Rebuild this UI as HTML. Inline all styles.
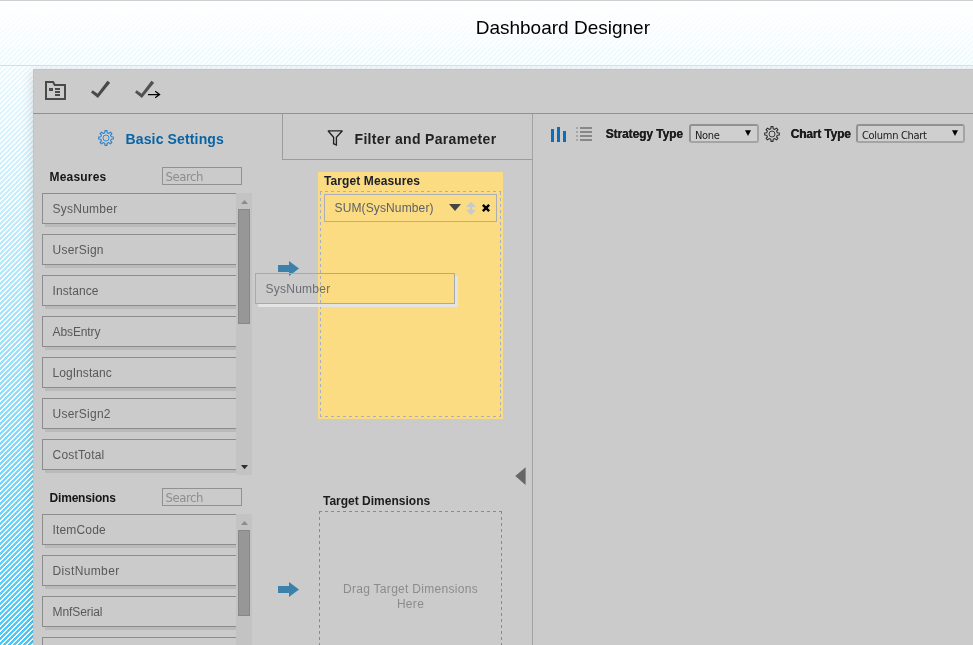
<!DOCTYPE html>
<html>
<head>
<meta charset="utf-8">
<title>Dashboard Designer</title>
<style>
html,body{margin:0;padding:0;}
body{width:973px;height:645px;overflow:hidden;position:relative;font-family:"Liberation Sans",Arial,sans-serif;font-size:12px;color:#222;
 background:linear-gradient(to bottom,rgb(255,255,255) 0px,rgb(70,201,249) 645px);}
.abs{position:absolute;}
#stripes{left:0;top:0;}
#all{left:0;top:0;width:973px;height:645px;will-change:transform;}
#topline{left:0;top:0;width:973px;height:1px;background:#cfcfcf;}
#hline{left:0;top:65px;width:973px;height:1px;background:#dcdcdc;}
#title{left:475.7px;top:17px;font-size:19px;line-height:22px;color:#000;white-space:nowrap;}
#panel{left:33px;top:3px;width:960px;height:600px;background:#cbcbcb;border-left:1px solid #c5c3c3;border-top:1px solid #c5c3c3;box-sizing:border-box;box-shadow:0 3px 11px rgba(40,20,10,0.17);}
#tbline{left:33px;top:113px;width:940px;height:1px;background:#929292;}
#vline{left:532px;top:114px;width:1px;height:531px;background:#a2a2a2;}
#tab2{left:282px;top:114px;width:250px;height:46px;border-left:1px solid #9c9c9c;border-bottom:1px solid #9c9c9c;box-sizing:border-box;}
.tabtxt{font-weight:bold;font-size:14px;line-height:16px;white-space:nowrap;}
#t1{left:125.5px;top:131px;color:#0a64a4;letter-spacing:0.14px;}
#t2{left:354.5px;top:131px;color:#222;letter-spacing:0.33px;}
.hd{font-weight:bold;font-size:12px;line-height:14px;color:#161616;white-space:nowrap;}
.search{width:80px;height:18px;box-sizing:border-box;border:1px solid #919191;background:#cbcbcb;color:#8e8e8e;font-family:"DejaVu Sans Condensed","Liberation Sans",sans-serif;font-size:13px;line-height:16px;padding:1px 0 0 2.6px;letter-spacing:-0.45px;white-space:nowrap;overflow:hidden;}
.clip{overflow:hidden;}
.item{left:6px;width:194px;height:31px;box-sizing:border-box;border:1px solid #8c8c8c;border-right:none;background:#cbcbcb;box-shadow:3px 3px 0 #bababa;color:#595959;font-size:12px;line-height:30px;padding-left:9.5px;white-space:nowrap;}
.sb{left:236px;width:16px;background:#c3c3c3;}
.thumb{left:238px;width:12px;background:#979797;border:1px solid #888;box-sizing:border-box;}
.lbl{font-weight:bold;font-size:12px;line-height:14px;color:#1c1c1c;white-space:nowrap;}
.sel{height:19px;box-sizing:border-box;border:2px solid #a0a0a0;border-color:#929292 #a4a4a4 #a4a4a4 #929292;border-radius:3px;background:#cfcfcf;font-family:"DejaVu Sans Condensed","Liberation Sans",sans-serif;font-size:11px;line-height:15px;color:#1a1a1a;padding:2px 0 0 4px;letter-spacing:-0.3px;white-space:nowrap;}
#tm{left:318px;top:172px;width:185px;height:247px;background:#fbdc82;}
#tmd{left:320px;top:191px;width:181px;height:226px;box-sizing:border-box;border:1px dashed #a9b0ba;}
#tmi{left:324px;top:194px;width:173px;height:28px;box-sizing:border-box;border:1px solid #a9aeb8;color:#5c606c;font-size:12px;line-height:27px;padding-left:9.5px;white-space:nowrap;}
#tdd{left:319px;top:511px;width:183px;height:140px;box-sizing:border-box;border:1px dashed #8a8a8a;}
#tdt{left:319px;top:582px;width:183px;text-align:center;color:#8c8c8c;font-size:12px;line-height:15px;letter-spacing:0.3px;}
#ghost{left:255px;top:273px;width:200px;height:31px;box-sizing:border-box;border:1px solid #a4aaae;box-shadow:3px 3px 0 #e4e4e2;color:#6a6d72;font-size:12px;line-height:30px;padding-left:9.5px;white-space:nowrap;}
</style>
</head>
<body>
<svg id="stripes" class="abs" width="973" height="645" shape-rendering="crispEdges"><defs><pattern id="st" width="5" height="5" patternUnits="userSpaceOnUse"><path fill="#fff" d="M0 0h2v1h-2zM0 1h1v1h-1zM4 1h1v1h-1zM3 2h2v1h-2zM2 3h2v1h-2zM1 4h2v1h-2z"/></pattern></defs><rect width="973" height="645" fill="url(#st)"/></svg>
<div id="all" class="abs">
<div id="topline" class="abs"></div>
<div id="hline" class="abs"></div>
<div id="title" class="abs">Dashboard Designer</div>

<div class="abs" style="left:0;top:66px;width:973px;height:579px;overflow:hidden"><div id="panel" class="abs"></div></div>
<div id="tbline" class="abs"></div>
<div id="vline" class="abs"></div>
<div id="tab2" class="abs"></div>

<!-- toolbar icons -->
<svg class="abs" style="left:40px;top:76px" width="130" height="30" viewBox="40 76 130 30">
 <path d="M46,82 H53.1 L54.7,85 H65 V99 H46 Z" fill="none" stroke="#4a4a4a" stroke-width="2" stroke-linejoin="miter"/>
 <rect x="49" y="88" width="4" height="3" fill="#4a4a4a"/>
 <rect x="55" y="88" width="5" height="2" fill="#4a4a4a"/>
 <rect x="55" y="91" width="5" height="2" fill="#4a4a4a"/>
 <rect x="55" y="94" width="5" height="2" fill="#4a4a4a"/>
 <path id="chk" d="M92.65,90.3 L91.0,92.5 L97.9,98.0 L110.2,82.85 L107.4,80.8 L97.6,93.7 Z" fill="#494949"/>
 <path d="M92.65,90.3 L91.0,92.5 L97.9,98.0 L110.2,82.85 L107.4,80.8 L97.6,93.7 Z" fill="#525252" transform="translate(44,0)"/>
 <path d="M148,94.5 H159.3 M155.2,91.2 L159.6,94.5 L155.2,97.8" fill="none" stroke="#000" stroke-width="1.25"/>
</svg>

<!-- tabs -->
<svg class="abs" style="left:98px;top:130px" width="16" height="16" viewBox="0 0 16 16"><path d="M6.82,2.73 L6.96,0.67 L9.04,0.67 L9.18,2.73 L10.89,3.44 L12.44,2.08 L13.92,3.56 L12.56,5.11 L13.27,6.82 L15.33,6.96 L15.33,9.04 L13.27,9.18 L12.56,10.89 L13.92,12.44 L12.44,13.92 L10.89,12.56 L9.18,13.27 L9.04,15.33 L6.96,15.33 L6.82,13.27 L5.11,12.56 L3.56,13.92 L2.08,12.44 L3.44,10.89 L2.73,9.18 L0.67,9.04 L0.67,6.96 L2.73,6.82 L3.44,5.11 L2.08,3.56 L3.56,2.08 L5.11,3.44Z" fill="none" stroke="#2d80c8" stroke-width="1.1" stroke-linejoin="round"/><circle cx="8" cy="8" r="3" fill="none" stroke="#3a8ad0" stroke-width="1"/></svg>
<div id="t1" class="abs tabtxt">Basic Settings</div>
<svg class="abs" style="left:325px;top:128px" width="20" height="20" viewBox="325 128 20 20"><path d="M328,130.8 H342.4 L336.4,137.2 V145 L333.6,143.7 V137.2 Z" fill="none" stroke="#222" stroke-width="1.35" stroke-linejoin="miter" stroke-miterlimit="2"/></svg>
<div id="t2" class="abs tabtxt">Filter and Parameter</div>

<!-- Measures -->
<div class="abs hd" style="left:49.5px;top:170px;letter-spacing:0.2px">Measures</div>
<div class="abs search" style="left:162px;top:167px;">Search</div>
<div class="abs sb" style="top:193px;height:282px;"></div>
<svg class="abs" style="left:236px;top:193px" width="16" height="282"><path d="M5,11 L12,11 L8.5,7 Z" fill="#8c8c8c"/><path d="M5,272 L12,272 L8.5,276.2 Z" fill="#2e2e2e"/></svg>
<div class="abs thumb" style="top:209px;height:115px;"></div>
<div class="abs clip" style="left:36px;top:190px;width:200px;height:290px;">
<div class="abs item" style="top:3px;"><span style="letter-spacing:0.25px">SysNumber</span></div>
<div class="abs item" style="top:44px;"><span style="letter-spacing:0.23px">UserSign</span></div>
<div class="abs item" style="top:85px;"><span style="letter-spacing:0.09px">Instance</span></div>
<div class="abs item" style="top:126px;"><span style="letter-spacing:-0.1px">AbsEntry</span></div>
<div class="abs item" style="top:167px;"><span style="letter-spacing:0.06px">LogInstanc</span></div>
<div class="abs item" style="top:208px;"><span style="letter-spacing:0.25px">UserSign2</span></div>
<div class="abs item" style="top:249px;"><span style="letter-spacing:0.22px">CostTotal</span></div>
</div>

<!-- Dimensions -->
<div class="abs hd" style="left:49.5px;top:491px;letter-spacing:-0.18px">Dimensions</div>
<div class="abs search" style="left:162px;top:488px;">Search</div>
<div class="abs sb" style="top:514px;height:131px;"></div>
<svg class="abs" style="left:236px;top:514px" width="16" height="20"><path d="M5,11 L12,11 L8.5,7 Z" fill="#8c8c8c"/></svg>
<div class="abs thumb" style="top:530px;height:86px;"></div>
<div class="abs clip" style="left:36px;top:511px;width:200px;height:134px;">
<div class="abs item" style="top:3px;"><span style="letter-spacing:0.17px">ItemCode</span></div>
<div class="abs item" style="top:44px;"><span style="letter-spacing:0.37px">DistNumber</span></div>
<div class="abs item" style="top:85px;"><span style="letter-spacing:-0.09px">MnfSerial</span></div>
<div class="abs item" style="top:126px;">&nbsp;</div>
</div>

<!-- arrows -->
<svg class="abs" style="left:276px;top:259px" width="26" height="20" viewBox="276 259 26 20"><path d="M278,265 H289 V261 L299,268.5 L289,276 V272 H278 Z" fill="#3b81a9"/></svg>
<svg class="abs" style="left:276px;top:580px" width="26" height="20" viewBox="276 259 26 20"><path d="M278,265 H289 V261 L299,268.5 L289,276 V272 H278 Z" fill="#3b81a9"/></svg>

<!-- Target Measures -->
<div id="tm" class="abs"></div>
<div class="abs lbl" style="left:324px;top:174px;color:#1a1e2c;letter-spacing:0.1px">Target Measures</div>
<svg class="abs" style="left:318px;top:189px" width="186" height="230" viewBox="318 189 186 230" shape-rendering="crispEdges" fill="none" stroke="#a9b0ba" stroke-width="1" stroke-dasharray="3 3">
 <path d="M320,191.5 H501 M320,416.5 H501" stroke-dashoffset="1"/>
 <path d="M320.5,192 V417 M500.5,192 V417"/>
</svg>
<div id="tmi" class="abs"><span style="letter-spacing:0.13px">SUM(SysNumber)</span></div>
<svg class="abs" style="left:446px;top:200px" width="50" height="18" viewBox="446 200 50 18">
 <path d="M449,204 H461 L455,211 Z" fill="#444"/>
 <path d="M471,201.8 L476,207 H472.2 V209.7 H476 L471,215 L466,209.7 H469.8 V207 H466 Z" fill="#c7c9cd"/>
 <path d="M482.85,204.85 L489.15,211.15 M489.15,204.85 L482.85,211.15" stroke="#000" stroke-width="2.4" fill="none"/>
</svg>

<!-- collapse arrow -->
<svg class="abs" style="left:514px;top:466px" width="14" height="20" viewBox="514 466 14 20"><path d="M525.6,467.3 V485 L515.3,476.1 Z" fill="#666"/></svg>

<!-- Target Dimensions -->
<div class="abs lbl" style="left:323px;top:494px;">Target Dimensions</div>
<svg class="abs" style="left:317px;top:509px" width="188" height="136" viewBox="317 509 188 136" shape-rendering="crispEdges" fill="none" stroke="#8a8a8a" stroke-width="1" stroke-dasharray="3 3">
 <path d="M319,511.5 H502"/>
 <path d="M319.5,511 V650 M501.5,511 V650"/>
</svg>
<div id="tdt" class="abs">Drag Target Dimensions<br>Here</div>

<!-- drag ghost -->
<div id="ghost" class="abs"><span style="letter-spacing:0.25px">SysNumber</span></div>

<!-- right toolbar -->
<svg class="abs" style="left:550px;top:126px" width="44" height="18" viewBox="550 126 44 18" shape-rendering="crispEdges">
 <rect x="551" y="129" width="3" height="13" fill="#0a6ebd"/><rect x="557" y="127" width="3" height="15" fill="#0a6ebd"/><rect x="563" y="131" width="3" height="11" fill="#0a6ebd"/>
 <g fill="#a6a6a6"><rect x="576" y="127" width="2" height="2"/><rect x="576" y="131" width="2" height="2"/><rect x="576" y="135" width="2" height="2"/><rect x="576" y="139" width="2" height="2"/></g>
 <g fill="#888"><rect x="580" y="127" width="12" height="2"/><rect x="580" y="131" width="12" height="2"/><rect x="580" y="135" width="12" height="2"/><rect x="580" y="139" width="12" height="2"/></g>
</svg>
<div class="abs lbl" style="left:605.6px;top:127px;letter-spacing:-0.1px;text-shadow:0.3px 0 0 #1c1c1c">Strategy Type</div>
<div class="abs sel" style="left:689px;top:124px;width:70px;">None</div>
<svg class="abs" style="left:744px;top:129px" width="8" height="8"><path d="M1,1.2 H7 L4,7 Z" fill="#000"/></svg>
<svg class="abs" style="left:764px;top:126px" width="16" height="16" viewBox="0 0 16 16"><path d="M6.82,2.73 L6.96,0.67 L9.04,0.67 L9.18,2.73 L10.89,3.44 L12.44,2.08 L13.92,3.56 L12.56,5.11 L13.27,6.82 L15.33,6.96 L15.33,9.04 L13.27,9.18 L12.56,10.89 L13.92,12.44 L12.44,13.92 L10.89,12.56 L9.18,13.27 L9.04,15.33 L6.96,15.33 L6.82,13.27 L5.11,12.56 L3.56,13.92 L2.08,12.44 L3.44,10.89 L2.73,9.18 L0.67,9.04 L0.67,6.96 L2.73,6.82 L3.44,5.11 L2.08,3.56 L3.56,2.08 L5.11,3.44Z" fill="none" stroke="#2e2e2e" stroke-width="1.1" stroke-linejoin="round"/><circle cx="8" cy="8" r="3" fill="none" stroke="#3a3a3a" stroke-width="1"/></svg>
<div class="abs lbl" style="left:790.6px;top:127px;letter-spacing:-0.18px;text-shadow:0.3px 0 0 #1c1c1c">Chart Type</div>
<div class="abs sel" style="left:856px;top:124px;width:109px;">Column Chart</div>
<svg class="abs" style="left:951px;top:129px" width="8" height="8"><path d="M1,1.2 H7 L4,7 Z" fill="#000"/></svg>

</div>
</body>
</html>
